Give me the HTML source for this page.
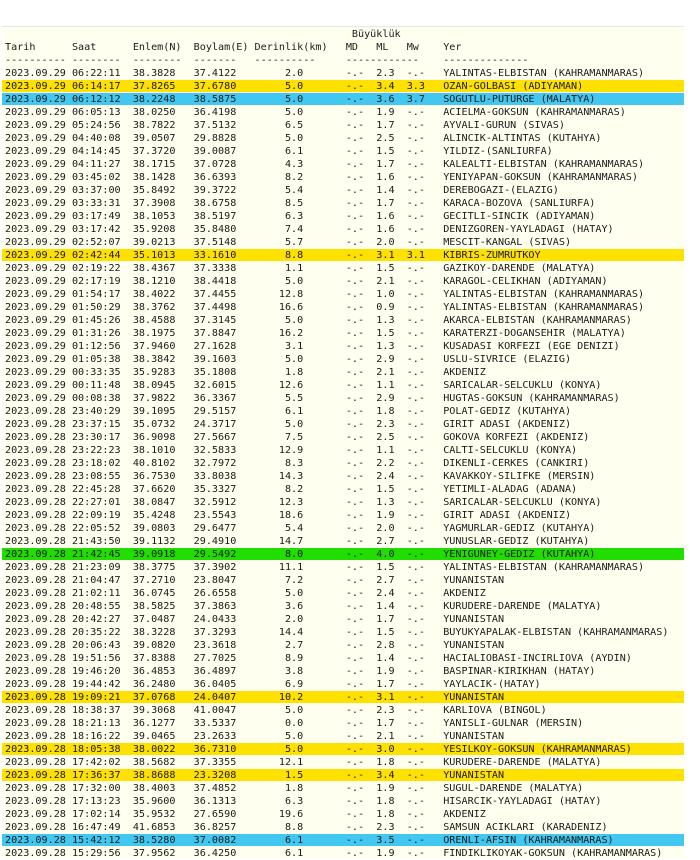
<!DOCTYPE html>
<html><head><meta charset="utf-8"><style>
html,body{margin:0;padding:0;background:#fff;width:700px;height:857px;overflow:hidden}
#box{position:absolute;left:2px;top:26px;width:682px;height:831px;background:#fffff0;border-top:1px solid #e6e6e6}
#t{position:absolute;left:2px;top:28px;width:682px;font-family:"DejaVu Sans Mono","Liberation Mono",monospace;font-size:10.12px;color:#1a1a1a}
#t div{height:12px;line-height:13px;margin-bottom:1px;white-space:pre;padding-left:3px;overflow:hidden}
#t div:nth-child(n+4){margin-top:-0.5px;padding-top:0.5px}
.y{background:#ffe100}.b{background:#42c8f0}.g{background:#22dd00}
</style></head><body><div id="box"></div><div id="t">
<div>                                                         Büyüklük</div>
<div>Tarih      Saat      Enlem(N)  Boylam(E) Derinlik(km)   MD   ML   Mw    Yer</div>
<div>---------- --------  --------  -------   ----------     ------------    --------------</div>
<div>2023.09.29 06:22:11  38.3828   37.4122        2.0       -.-  2.3  -.-   YALINTAS-ELBISTAN (KAHRAMANMARAS)</div>
<div class="y">2023.09.29 06:14:17  37.8265   37.6780        5.0       -.-  3.4  3.3   OZAN-GOLBASI (ADIYAMAN)</div>
<div class="b">2023.09.29 06:12:12  38.2248   38.5875        5.0       -.-  3.6  3.7   SOGUTLU-PUTURGE (MALATYA)</div>
<div>2023.09.29 06:05:13  38.0250   36.4198        5.0       -.-  1.9  -.-   ACIELMA-GOKSUN (KAHRAMANMARAS)</div>
<div>2023.09.29 05:24:56  38.7822   37.5132        6.5       -.-  1.7  -.-   AYVALI-GURUN (SIVAS)</div>
<div>2023.09.29 04:40:08  39.0507   29.8828        5.0       -.-  2.5  -.-   ALINCIK-ALTINTAS (KUTAHYA)</div>
<div>2023.09.29 04:14:45  37.3720   39.0087        6.1       -.-  1.5  -.-   YILDIZ-(SANLIURFA)</div>
<div>2023.09.29 04:11:27  38.1715   37.0728        4.3       -.-  1.7  -.-   KALEALTI-ELBISTAN (KAHRAMANMARAS)</div>
<div>2023.09.29 03:45:02  38.1428   36.6393        8.2       -.-  1.6  -.-   YENIYAPAN-GOKSUN (KAHRAMANMARAS)</div>
<div>2023.09.29 03:37:00  35.8492   39.3722        5.4       -.-  1.4  -.-   DEREBOGAZI-(ELAZIG)</div>
<div>2023.09.29 03:33:31  37.3908   38.6758        8.5       -.-  1.7  -.-   KARACA-BOZOVA (SANLIURFA)</div>
<div>2023.09.29 03:17:49  38.1053   38.5197        6.3       -.-  1.6  -.-   GECITLI-SINCIK (ADIYAMAN)</div>
<div>2023.09.29 03:17:42  35.9208   35.8480        7.4       -.-  1.6  -.-   DENIZGOREN-YAYLADAGI (HATAY)</div>
<div>2023.09.29 02:52:07  39.0213   37.5148        5.7       -.-  2.0  -.-   MESCIT-KANGAL (SIVAS)</div>
<div class="y">2023.09.29 02:42:44  35.1013   33.1610        8.8       -.-  3.1  3.1   KIBRIS-ZUMRUTKOY</div>
<div>2023.09.29 02:19:22  38.4367   37.3338        1.1       -.-  1.5  -.-   GAZIKOY-DARENDE (MALATYA)</div>
<div>2023.09.29 02:17:19  38.1210   38.4418        5.0       -.-  2.1  -.-   KARAGOL-CELIKHAN (ADIYAMAN)</div>
<div>2023.09.29 01:54:17  38.4022   37.4455       12.8       -.-  1.0  -.-   YALINTAS-ELBISTAN (KAHRAMANMARAS)</div>
<div>2023.09.29 01:50:29  38.3762   37.4498       16.6       -.-  0.9  -.-   YALINTAS-ELBISTAN (KAHRAMANMARAS)</div>
<div>2023.09.29 01:45:26  38.4588   37.3145        5.0       -.-  1.3  -.-   AKARCA-ELBISTAN (KAHRAMANMARAS)</div>
<div>2023.09.29 01:31:26  38.1975   37.8847       16.2       -.-  1.5  -.-   KARATERZI-DOGANSEHIR (MALATYA)</div>
<div>2023.09.29 01:12:56  37.9460   27.1628        3.1       -.-  1.3  -.-   KUSADASI KORFEZI (EGE DENIZI)</div>
<div>2023.09.29 01:05:38  38.3842   39.1603        5.0       -.-  2.9  -.-   USLU-SIVRICE (ELAZIG)</div>
<div>2023.09.29 00:33:35  35.9283   35.1808        1.8       -.-  2.1  -.-   AKDENIZ</div>
<div>2023.09.29 00:11:48  38.0945   32.6015       12.6       -.-  1.1  -.-   SARICALAR-SELCUKLU (KONYA)</div>
<div>2023.09.29 00:08:38  37.9822   36.3367        5.5       -.-  2.9  -.-   HUGTAS-GOKSUN (KAHRAMANMARAS)</div>
<div>2023.09.28 23:40:29  39.1095   29.5157        6.1       -.-  1.8  -.-   POLAT-GEDIZ (KUTAHYA)</div>
<div>2023.09.28 23:37:15  35.0732   24.3717        5.0       -.-  2.3  -.-   GIRIT ADASI (AKDENIZ)</div>
<div>2023.09.28 23:30:17  36.9098   27.5667        7.5       -.-  2.5  -.-   GOKOVA KORFEZI (AKDENIZ)</div>
<div>2023.09.28 23:22:23  38.1010   32.5833       12.9       -.-  1.1  -.-   CALTI-SELCUKLU (KONYA)</div>
<div>2023.09.28 23:18:02  40.8102   32.7972        8.3       -.-  2.2  -.-   DIKENLI-CERKES (CANKIRI)</div>
<div>2023.09.28 23:08:55  36.7530   33.8038       14.3       -.-  2.4  -.-   KAVAKKOY-SILIFKE (MERSIN)</div>
<div>2023.09.28 22:45:28  37.6620   35.3327        8.2       -.-  1.5  -.-   YETIMLI-ALADAG (ADANA)</div>
<div>2023.09.28 22:27:01  38.0847   32.5912       12.3       -.-  1.3  -.-   SARICALAR-SELCUKLU (KONYA)</div>
<div>2023.09.28 22:09:19  35.4248   23.5543       18.6       -.-  1.9  -.-   GIRIT ADASI (AKDENIZ)</div>
<div>2023.09.28 22:05:52  39.0803   29.6477        5.4       -.-  2.0  -.-   YAGMURLAR-GEDIZ (KUTAHYA)</div>
<div>2023.09.28 21:43:50  39.1132   29.4910       14.7       -.-  2.7  -.-   YUNUSLAR-GEDIZ (KUTAHYA)</div>
<div class="g">2023.09.28 21:42:45  39.0918   29.5492        8.0       -.-  4.0  -.-   YENIGUNEY-GEDIZ (KUTAHYA)</div>
<div>2023.09.28 21:23:09  38.3775   37.3902       11.1       -.-  1.5  -.-   YALINTAS-ELBISTAN (KAHRAMANMARAS)</div>
<div>2023.09.28 21:04:47  37.2710   23.8047        7.2       -.-  2.7  -.-   YUNANISTAN</div>
<div>2023.09.28 21:02:11  36.0745   26.6558        5.0       -.-  2.4  -.-   AKDENIZ</div>
<div>2023.09.28 20:48:55  38.5825   37.3863        3.6       -.-  1.4  -.-   KURUDERE-DARENDE (MALATYA)</div>
<div>2023.09.28 20:42:27  37.0487   24.0433        2.0       -.-  1.7  -.-   YUNANISTAN</div>
<div>2023.09.28 20:35:22  38.3228   37.3293       14.4       -.-  1.5  -.-   BUYUKYAPALAK-ELBISTAN (KAHRAMANMARAS)</div>
<div>2023.09.28 20:06:43  39.0820   23.3618        2.7       -.-  2.8  -.-   YUNANISTAN</div>
<div>2023.09.28 19:51:56  37.8388   27.7025        8.9       -.-  1.4  -.-   HACIALIOBASI-INCIRLIOVA (AYDIN)</div>
<div>2023.09.28 19:46:20  36.4853   36.4897        3.8       -.-  1.9  -.-   BASPINAR-KIRIKHAN (HATAY)</div>
<div>2023.09.28 19:44:42  36.2480   36.0405        6.9       -.-  1.7  -.-   YAYLACIK-(HATAY)</div>
<div class="y">2023.09.28 19:09:21  37.0768   24.0407       10.2       -.-  3.1  -.-   YUNANISTAN</div>
<div>2023.09.28 18:38:37  39.3068   41.0047        5.0       -.-  2.3  -.-   KARLIOVA (BINGOL)</div>
<div>2023.09.28 18:21:13  36.1277   33.5337        0.0       -.-  1.7  -.-   YANISLI-GULNAR (MERSIN)</div>
<div>2023.09.28 18:16:22  39.0465   23.2633        5.0       -.-  2.1  -.-   YUNANISTAN</div>
<div class="y">2023.09.28 18:05:38  38.0022   36.7310        5.0       -.-  3.0  -.-   YESILKOY-GOKSUN (KAHRAMANMARAS)</div>
<div>2023.09.28 17:42:02  38.5682   37.3355       12.1       -.-  1.8  -.-   KURUDERE-DARENDE (MALATYA)</div>
<div class="y">2023.09.28 17:36:37  38.8688   23.3208        1.5       -.-  3.4  -.-   YUNANISTAN</div>
<div>2023.09.28 17:32:00  38.4003   37.4852        1.8       -.-  1.9  -.-   SUGUL-DARENDE (MALATYA)</div>
<div>2023.09.28 17:13:23  35.9600   36.1313        6.3       -.-  1.8  -.-   HISARCIK-YAYLADAGI (HATAY)</div>
<div>2023.09.28 17:02:14  35.9532   27.6590       19.6       -.-  1.8  -.-   AKDENIZ</div>
<div>2023.09.28 16:47:49  41.6853   36.8257        8.8       -.-  2.3  -.-   SAMSUN ACIKLARI (KARADENIZ)</div>
<div class="b">2023.09.28 15:42:12  38.5280   37.0082        6.1       -.-  3.5  -.-   ORENLI-AFSIN (KAHRAMANMARAS)</div>
<div>2023.09.28 15:29:56  37.9562   36.4250        6.1       -.-  1.9  -.-   FINDIKLIKOYAK-GOKSUN (KAHRAMANMARAS)</div>
</div></body></html>
